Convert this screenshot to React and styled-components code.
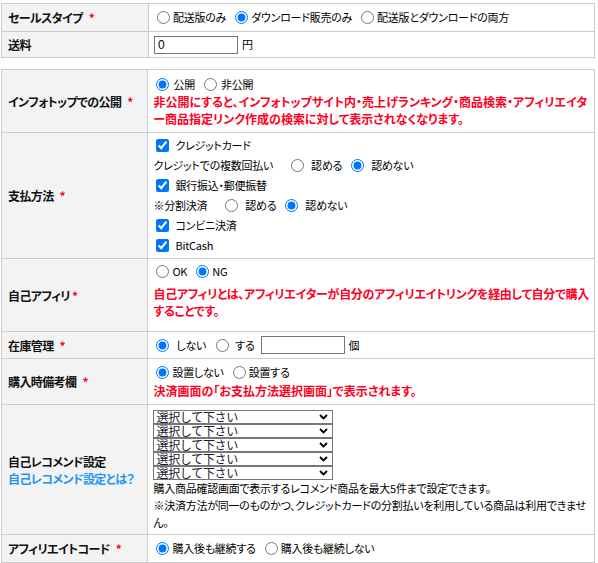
import React from 'react'
import styled, { createGlobalStyle } from 'styled-components'

const Global = createGlobalStyle`
  body {
    margin: 0;
    background: #fff;
    font-family: "Noto Sans CJK JP", "Noto Sans", sans-serif;
    font-size: 12px;
    color: #000;
    font-feature-settings: "palt";
  }
`

const Page = styled.div`
  padding: 3px 0 0 1px;
`

const Table = styled.table`
  width: 594px;
  border-collapse: collapse;
  margin-bottom: ${p => p.$gap || 0}px;
`

const Row = styled.tr`
  height: ${p => p.$h}px;
`

const Label = styled.th`
  width: 147px;
  box-sizing: border-box;
  background: #f3f3f3;
  border: 1px solid #ccc;
  text-align: left;
  vertical-align: middle;
  padding: 0 6px;
  font-weight: bold;
  font-size: 12px;
  letter-spacing: -0.6px;
  color: #111;
  line-height: 17px;
`

const Req = styled.span`
  color: #ff0022;
  margin-left: ${p => p.$ml ?? 6}px;
`

const Cell = styled.td`
  border: 1px solid #ccc;
  vertical-align: middle;
  padding: ${p => p.$pad || '0 5px'};
  line-height: 17px;
  font-size: 11px;
  letter-spacing: -0.25px;
`

const Line = styled.div`
  display: flex;
  align-items: center;
  height: ${p => p.$h || 17}px;
  white-space: nowrap;
`

const Opt = styled.label`
  display: inline-flex;
  align-items: center;
  margin-right: ${p => p.$mr ?? 6}px;
  margin-left: ${p => p.$ml || 0}px;
`

const Radio = styled.input.attrs({ type: 'radio' })`
  width: 13px;
  height: 13px;
  margin: 0 ${p => p.$gap || 3}px 0 3px;
`

const Check = styled.input.attrs({ type: 'checkbox' })`
  width: 13px;
  height: 13px;
  margin: 0 6px 0 3px;
`

const Note = styled.div`
  color: #ff0022;
  font-weight: bold;
  font-size: 12px;
  letter-spacing: ${p => p.$ls ?? 0}px;
  line-height: 17px;
  white-space: nowrap;
  margin-top: ${p => p.$mt || 0}px;
`

const TextInput = styled.input.attrs({ type: 'text' })`
  width: 84px;
  height: 18px;
  box-sizing: border-box;
  border: 1px solid #767676;
  padding: 0 3px;
  font-size: 12px;
  font-family: "Liberation Sans", sans-serif;
  margin: 0 4px 0 ${p => p.$ml || 0}px;
`

const SelectWrap = styled.div`
  position: relative;
  width: 180px;
  height: 14px;
`

const Select = styled.select`
  appearance: none;
  display: block;
  width: 180px;
  height: 14px;
  box-sizing: border-box;
  border: 1px solid #767676;
  border-radius: 0;
  padding: 0 2px;
  margin: 0;
  font-size: 12px;
  line-height: 12px;
  letter-spacing: -0.3px;
  font-family: "Noto Sans CJK JP", sans-serif;
  color: #1a1a2a;
  background: #fff;
`

const Chevron = styled.svg`
  position: absolute;
  right: 5px;
  top: 4px;
  pointer-events: none;
`

const Help = styled.a`
  display: block;
  color: #2196f3;
  text-decoration: none;
`

const Small = styled.div`
  line-height: 17px;
  white-space: nowrap;
`

const App = () => {
  return (
    <>
      <Global />
      <Page>
        <Table $gap={11}>
          <tbody>
            <Row $h={28}>
              <Label>セールスタイプ<Req>*</Req></Label>
              <Cell>
                <Line>
                  <Opt><Radio name="st" defaultChecked={false} />配送版のみ</Opt>
                  <Opt><Radio name="st" defaultChecked />ダウンロード販売のみ</Opt>
                  <Opt><Radio name="st" />配送版とダウンロードの両方</Opt>
                </Line>
              </Cell>
            </Row>
            <Row $h={26}>
              <Label>送料</Label>
              <Cell>
                <Line><TextInput defaultValue="0" />円</Line>
              </Cell>
            </Row>
          </tbody>
        </Table>

        <Table>
          <tbody>
            <Row $h={63}>
              <Label>インフォトップでの公開<Req>*</Req></Label>
              <Cell>
                <Line>
                  <Opt $mr={6}><Radio name="pub" $gap={4} defaultChecked />公開</Opt>
                  <Opt><Radio name="pub" $gap={4} />非公開</Opt>
                </Line>
                <Note>
                  非公開にすると、インフォトップサイト内・売上げランキング・商品検索・アフィリエイタ<br />
                  ー商品指定リンク作成の検索に対して表示されなくなります。
                </Note>
              </Cell>
            </Row>
            <Row $h={126}>
              <Label>支払方法<Req>*</Req></Label>
              <Cell>
                <Line $h={20}><Opt><Check defaultChecked />クレジットカード</Opt></Line>
                <Line $h={20}>
                  クレジットでの複数回払い
                  <Opt $ml={15}><Radio name="multi" $gap={7} />認める</Opt>
                  <Opt><Radio name="multi" $gap={7} defaultChecked />認めない</Opt>
                </Line>
                <Line $h={20}><Opt><Check defaultChecked />銀行振込・郵便振替</Opt></Line>
                <Line $h={20}>
                  ※分割決済
                  <Opt $ml={15}><Radio name="split" $gap={7} />認める</Opt>
                  <Opt><Radio name="split" $gap={7} defaultChecked />認めない</Opt>
                </Line>
                <Line $h={20}><Opt><Check defaultChecked />コンビニ決済</Opt></Line>
                <Line $h={20}><Opt><Check defaultChecked />BitCash</Opt></Line>
              </Cell>
            </Row>
            <Row $h={73}>
              <Label>自己アフィリ<Req $ml={2}>*</Req></Label>
              <Cell $pad="4px 5px 12px">
                <Line>
                  <Opt><Radio name="self" />OK</Opt>
                  <Opt><Radio name="self" defaultChecked />NG</Opt>
                </Line>
                <Note $mt={5} $ls={-0.3}>
                  自己アフィリとは、アフィリエイターが自分のアフィリエイトリンクを経由して自分で購入<br />
                  することです。
                </Note>
              </Cell>
            </Row>
            <Row $h={27}>
              <Label>在庫管理<Req>*</Req></Label>
              <Cell>
                <Line>
                  <Opt $mr={7}><Radio name="stock" $gap={7} defaultChecked />しない</Opt>
                  <Opt $mr={6}><Radio name="stock" $gap={6} />する</Opt>
                  <TextInput />個
                </Line>
              </Cell>
            </Row>
            <Row $h={46}>
              <Label>購入時備考欄<Req>*</Req></Label>
              <Cell>
                <Line>
                  <Opt><Radio name="memo" defaultChecked />設置しない</Opt>
                  <Opt><Radio name="memo" />設置する</Opt>
                </Line>
                <Note $mt={1}>決済画面の「お支払方法選択画面」で表示されます。</Note>
              </Cell>
            </Row>
            <Row $h={130}>
              <Label>
                自己レコメンド設定
                <Help href="#">自己レコメンド設定とは？</Help>
              </Label>
              <Cell $pad="4px 5px 3px">
                {[0, 1, 2, 3, 4].map(i => (
                  <SelectWrap key={i}>
                    <Select defaultValue="">
                      <option value="">選択して下さい</option>
                    </Select>
                    <Chevron width="9" height="6" viewBox="0 0 9 6">
                      <polyline points="1,1 4.5,4.5 8,1" fill="none" stroke="#000" strokeWidth="1.8" />
                    </Chevron>
                  </SelectWrap>
                ))}
                <Small>購入商品確認画面で表示するレコメンド商品を最大5件まで設定できます。</Small>
                <Small>※決済方法が同一のものかつ、クレジットカードの分割払いを利用している商品は利用できませ</Small>
                <Small>ん。</Small>
              </Cell>
            </Row>
            <Row $h={28}>
              <Label>アフィリエイトコード<Req>*</Req></Label>
              <Cell>
                <Line>
                  <Opt><Radio name="code" defaultChecked />購入後も継続する</Opt>
                  <Opt><Radio name="code" />購入後も継続しない</Opt>
                </Line>
              </Cell>
            </Row>
          </tbody>
        </Table>
      </Page>
    </>
  )
}

export default App
